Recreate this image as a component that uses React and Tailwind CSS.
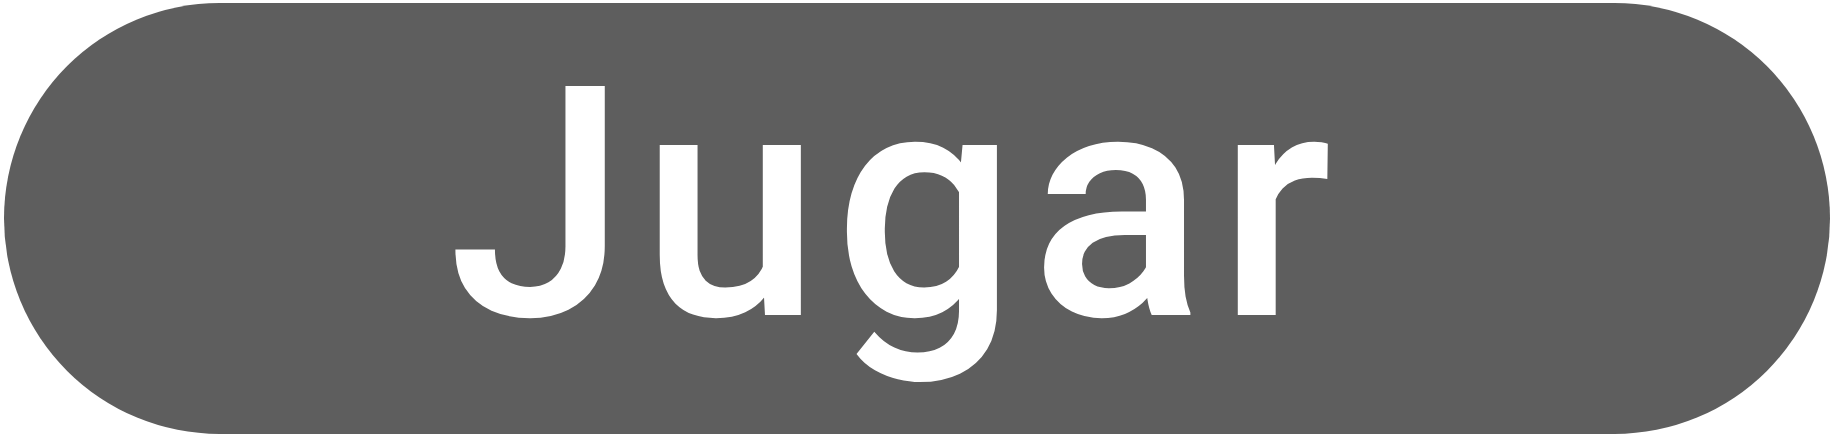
export default function App() {
  return (
    <div className="w-[1834px] h-[439px] bg-white pt-[3px] pl-[4px]">
      <button
        className="w-[1826px] h-[431px] rounded-full bg-[#5e5e5e] flex items-center justify-center pb-[28px] pr-[40px] text-white text-[322px] font-medium leading-none tracking-[14px]"
        style={{ fontFamily: "Roboto, 'Noto Sans', sans-serif" }}
      >
        <span>Jugar</span>
      </button>
    </div>
  );
}
